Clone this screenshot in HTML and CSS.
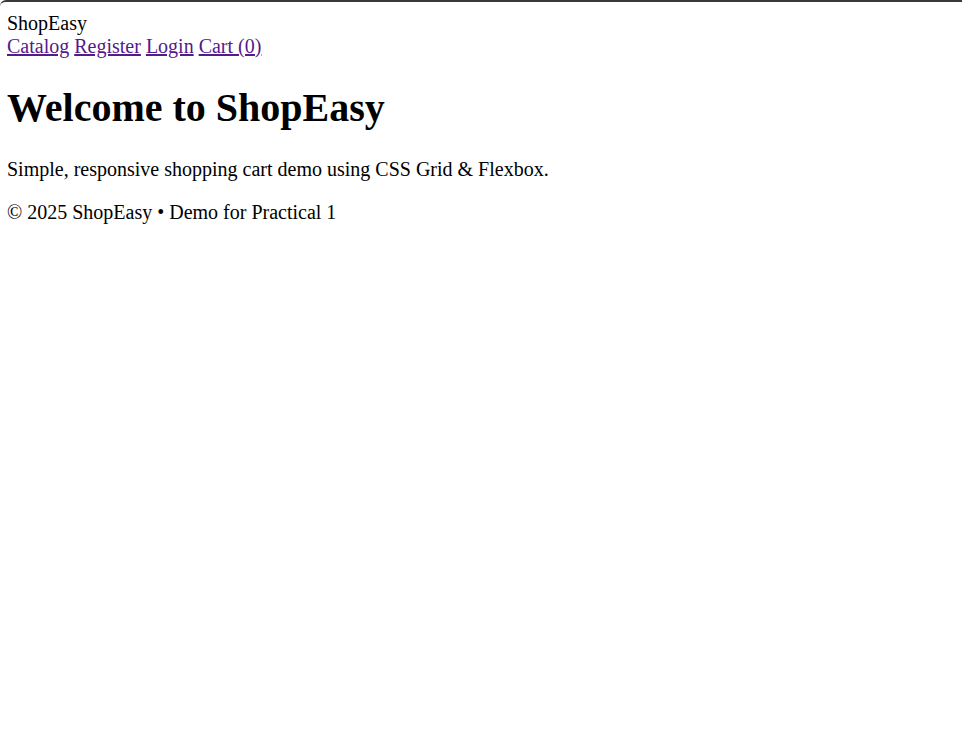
FILE: index.html
```html
<!DOCTYPE html>
<html lang="en">
<head>
<meta charset="utf-8">
<title>ShopEasy</title>
<link rel="stylesheet" href="styles.css">
</head>
<body class="page">
<header class="site-header">
<div class="brand">ShopEasy</div>
<nav class="nav">
<a href="#">Catalog</a>
<a href="#">Register</a>
<a href="#">Login</a>
<a href="#">Cart (0)</a>
</nav>
</header>
<main class="main">
<h1 class="title">Welcome to ShopEasy</h1>
<p class="lead">Simple, responsive shopping cart demo using CSS Grid &amp; Flexbox.</p>
</main>
<footer class="site-footer">
<p class="copy">© 2025 ShopEasy • Demo for Practical 1</p>
</footer>
</body>
</html>
```
FILE: styles.css
```css
html {
  background: #fff;
  border-top: 2px solid #3a3a3a;
  border-top-left-radius: 6px;
}
.page {
  margin: 9px 8px 8px 7px;
  font-family: "Liberation Serif", "Times New Roman", serif;
  font-size: 20px;
  color: #000;
}
.brand { line-height: 24px; }
.nav a { color: #551a8b; }
.title { font-size: 2em; margin: 26px 0 0.67em; }
.lead, .copy { margin: 1em 0; }
```
